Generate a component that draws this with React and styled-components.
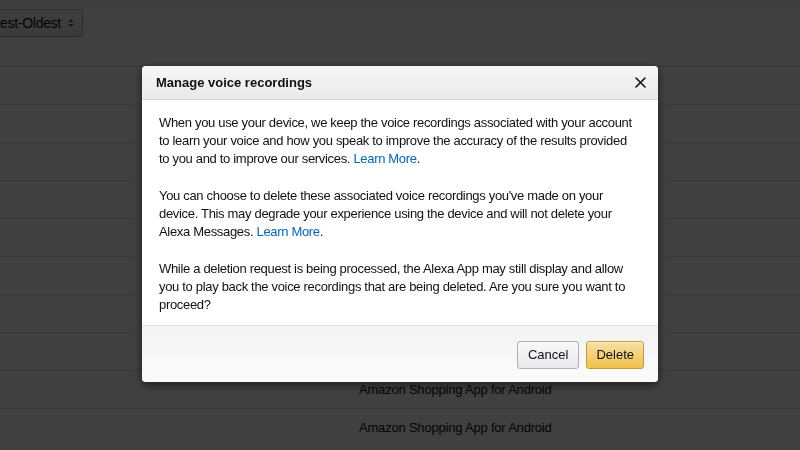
import React from "react";
import styled, {createGlobalStyle} from "styled-components";

const GlobalStyle = createGlobalStyle`
  html, body {
    margin: 0;
    padding: 0;
    background: #ffffff;
    font-family: "Liberation Sans", Arial, sans-serif;
    color: #111111;
  }
  * { box-sizing: border-box; }
`

const Page = styled.div`
  width: 800px;
  height: 450px;
  overflow: hidden;
  display: flex;
  flex-direction: column;
`

const TopRule = styled.div`
  height: 4px;
  border-bottom: 1px solid #e6e6e6;
`

const Toolbar = styled.div`
  height: 62px;
  padding-top: 5px;
  display: flex;
  align-items: flex-start;
`

const SortSelect = styled.div`
  margin-left: -38px;
  height: 28px;
  padding: 0 8px 0 10px;
  display: flex;
  align-items: center;
  gap: 7px;
  font-size: 14px;
  letter-spacing: -0.3px;
  color: #111;
  background: linear-gradient(#f7f8fa, #e7e9ec);
  border: 1px solid #adb1b8;
  border-radius: 4px;
`

const Arrows = styled.svg`
  width: 6px;
  height: 10px;
`

const RowList = styled.div`
  display: flex;
  flex-direction: column;
`

const Row = styled.div`
  height: 38px;
  border-top: 1px solid #e4e4e4;
  display: grid;
  grid-template-columns: 359px 1fr;
  align-items: center;
  font-size: 13px;
  letter-spacing: -0.2px;
  color: #111;
`

const Overlay = styled.div`
  position: fixed;
  inset: 0;
  background: rgba(0, 0, 0, 0.75);
`

const Modal = styled.div`
  position: fixed;
  left: 142px;
  top: 66px;
  width: 516px;
  background: #ffffff;
  border-radius: 4px;
  box-shadow: 0 3px 10px rgba(0, 0, 0, 0.55);
  overflow: hidden;
`

const Header = styled.div`
  height: 34px;
  padding: 0 10px 0 14px;
  display: flex;
  align-items: center;
  justify-content: space-between;
  background: linear-gradient(#f7f7f7, #e9e9e9);
  border-bottom: 1px solid #d3d3d3;
`

const Title = styled.h4`
  margin: 0;
  font-size: 13px;
  font-weight: bold;
  color: #111;
`

const CloseIcon = styled.svg`
  width: 11px;
  height: 11px;
  margin-right: 2px;
`

const Body = styled.div`
  padding: 14px 10px 11px 17px;
  font-size: 13px;
  line-height: 18px;
  letter-spacing: -0.32px;
  color: #111;
  white-space: nowrap;
`

const Para = styled.p`
  margin: 0 0 19px 0;
  &:last-child {
    margin-bottom: 0;
  }
`

const Link = styled.a`
  color: #0066c0;
  text-decoration: none;
`

const Footer = styled.div`
  height: 57px;
  padding: 1px 14px 0 0;
  display: flex;
  justify-content: flex-end;
  align-items: center;
  gap: 7px;
  background: linear-gradient(#f3f3f3, #fbfbfb);
  border-top: 1px solid #dedede;
`

const Button = styled.button`
  height: 28px;
  padding: 0 ${p => p.$pad}px;
  font-family: "Liberation Sans", Arial, sans-serif;
  font-size: 13px;
  color: #111;
  border-radius: 3px;
  border: 1px solid ${p => p.$primary ? "#c99a2e" : "#adb1b8"};
  background: ${p => p.$primary
    ? "linear-gradient(#f7dfa5, #f0c14b)"
    : "linear-gradient(#f7f8fa, #e7e9ec)"};
  box-shadow: 0 1px 0 rgba(255, 255, 255, 0.6) inset;
`

const rows = Array.from({length: 10}, (_, i) => i)

function App() {
    return (
        <>
            <GlobalStyle/>
            <Page>
                <TopRule/>
                <Toolbar>
                    <SortSelect>
                        <span>Newest-Oldest</span>
                        <Arrows viewBox="0 0 6 10">
                            <path d="M0.5 4 L3 1 L5.5 4 Z M0.5 6 L3 9 L5.5 6 Z" fill="#555"/>
                        </Arrows>
                    </SortSelect>
                </Toolbar>
                <RowList>
                    {rows.map(i => (
                        <Row key={i}>
                            <span/>
                            <span>Amazon Shopping App for Android</span>
                        </Row>
                    ))}
                </RowList>
            </Page>
            <Overlay/>
            <Modal>
                <Header>
                    <Title>Manage voice recordings</Title>
                    <CloseIcon viewBox="0 0 11 11">
                        <path d="M1 1 L10 10 M10 1 L1 10" stroke="#111" strokeWidth="1.6" strokeLinecap="round"/>
                    </CloseIcon>
                </Header>
                <Body>
                    <Para>
                        When you use your device, we keep the voice recordings associated with your account<br/>
                        to learn your voice and how you speak to improve the accuracy of the results provided<br/>
                        to you and to improve our services. <Link href="#">Learn More</Link>.
                    </Para>
                    <Para>
                        You can choose to delete these associated voice recordings you've made on your<br/>
                        device. This may degrade your experience using the device and will not delete your<br/>
                        Alexa Messages. <Link href="#">Learn More</Link>.
                    </Para>
                    <Para>
                        While a deletion request is being processed, the Alexa App may still display and allow<br/>
                        you to play back the voice recordings that are being deleted. Are you sure you want to<br/>
                        proceed?
                    </Para>
                </Body>
                <Footer>
                    <Button $pad={10}>Cancel</Button>
                    <Button $primary $pad={9}>Delete</Button>
                </Footer>
            </Modal>
        </>
    );
}

export default App;
